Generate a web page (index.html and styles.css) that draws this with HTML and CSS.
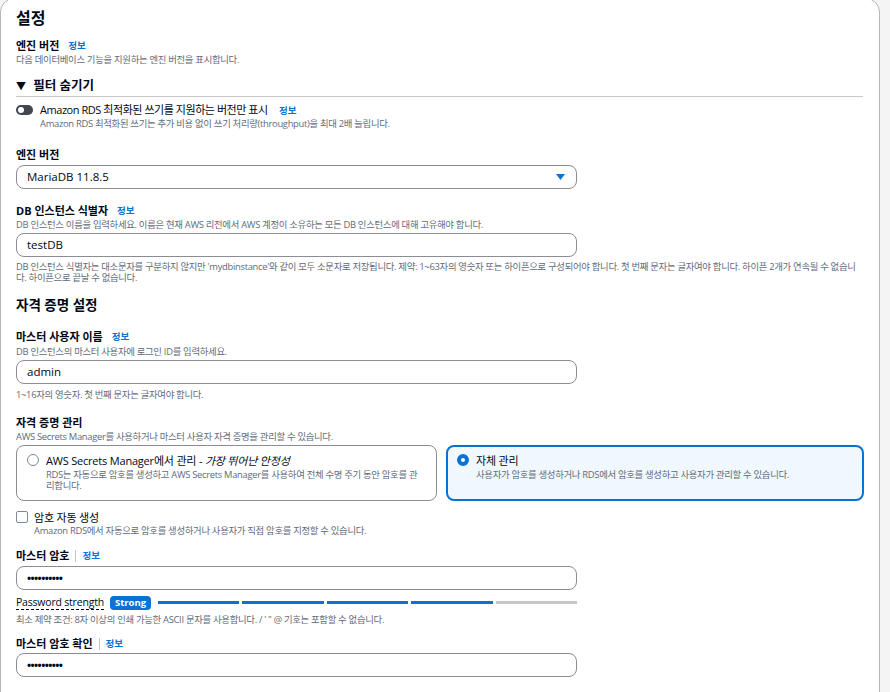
FILE: index.html
```html
<!DOCTYPE html>
<html lang="ko">
<head>
<meta charset="utf-8">
<title>설정</title>
<link rel="stylesheet" href="styles.css">
</head>
<body>
<div class="page">
  <section class="card">
    <h2 class="h-main">설정</h2>

    <div class="field f-first">
      <div class="label">엔진 버전 <a class="info">정보</a></div>
      <div class="desc">다음 데이터베이스 기능을 지원하는 엔진 버전을 표시합니다.</div>
    </div>

    <div class="expander">
      <span class="caret">▼</span> 필터 숨기기
    </div>

    <div class="toggle-row">
      <span class="toggle"><span class="knob"></span></span>
      <div class="toggle-text">
        <div class="toggle-label">Amazon RDS 최적화된 쓰기를 지원하는 버전만 표시 <a class="info">정보</a></div>
        <div class="desc">Amazon RDS 최적화된 쓰기는 추가 비용 없이 쓰기 처리량(throughput)을 최대 2배 늘립니다.</div>
      </div>
    </div>

    <div class="field f-engine">
      <div class="label">엔진 버전</div>
      <div class="select">
        <span>MariaDB 11.8.5</span>
        <svg class="arrow" width="9" height="6" viewBox="0 0 9 6"><path d="M0 0H9L4.5 6Z" fill="#0972d3"/></svg>
      </div>
    </div>

    <div class="field f-db">
      <div class="label">DB 인스턴스 식별자 <a class="info">정보</a></div>
      <div class="desc">DB 인스턴스 이름을 입력하세요. 이름은 현재 AWS 리전에서 AWS 계정이 소유하는 모든 DB 인스턴스에 대해 고유해야 합니다.</div>
      <div class="input">testDB</div>
      <div class="desc constraint">DB 인스턴스 식별자는 대소문자를 구분하지 않지만 'mydbinstance'와 같이 모두 소문자로 저장됩니다. 제약: 1~63자의 영숫자 또는 하이픈으로 구성되어야 합니다. 첫 번째 문자는 글자여야 합니다. 하이픈 2개가 연속될 수 없습니다. 하이픈으로 끝날 수 없습니다.</div>
    </div>

    <h3 class="h-sub">자격 증명 설정</h3>

    <div class="field f-user">
      <div class="label">마스터 사용자 이름 <a class="info">정보</a></div>
      <div class="desc">DB 인스턴스의 마스터 사용자에 로그인 ID를 입력하세요.</div>
      <div class="input">admin</div>
      <div class="desc constraint">1~16자의 영숫자. 첫 번째 문자는 글자여야 합니다.</div>
    </div>

    <div class="field">
      <div class="label">자격 증명 관리</div>
      <div class="desc">AWS Secrets Manager를 사용하거나 마스터 사용자 자격 증명을 관리할 수 있습니다.</div>
      <div class="tiles">
        <div class="tile">
          <span class="radio"></span>
          <div>
            <div class="tile-title">AWS Secrets Manager에서 관리 - <em>가장 뛰어난 안정성</em></div>
            <div class="desc">RDS는 자동으로 암호를 생성하고 AWS Secrets Manager를 사용하여 전체 수명 주기 동안 암호를 관리합니다.</div>
          </div>
        </div>
        <div class="tile selected">
          <span class="radio on"></span>
          <div>
            <div class="tile-title">자체 관리</div>
            <div class="desc">사용자가 암호를 생성하거나 RDS에서 암호를 생성하고 사용자가 관리할 수 있습니다.</div>
          </div>
        </div>
      </div>
    </div>

    <div class="check-row">
      <span class="checkbox"></span>
      <div>
        <div class="check-label">암호 자동 생성</div>
        <div class="desc">Amazon RDS에서 자동으로 암호를 생성하거나 사용자가 직접 암호를 지정할 수 있습니다.</div>
      </div>
    </div>

    <div class="field f-pw">
      <div class="label">마스터 암호<span class="divider"></span><a class="info">정보</a></div>
      <div class="input pw">••••••••••</div>
      <div class="strength">
        <span class="strength-label">Password strength</span>
        <span class="badge">Strong</span>
        <div class="bars">
          <span class="bar on"></span><span class="bar on"></span><span class="bar on"></span><span class="bar on"></span><span class="bar"></span>
        </div>
      </div>
      <div class="desc constraint">최소 제약 조건: 8자 이상의 인쇄 가능한 ASCII 문자를 사용합니다. / ' " @ 기호는 포함할 수 없습니다.</div>
    </div>

    <div class="field f-pw2">
      <div class="label">마스터 암호 확인<span class="divider"></span><a class="info">정보</a></div>
      <div class="input pw">••••••••••</div>
    </div>
  </section>
</div>
</body>
</html>
```

FILE: styles.css
```css
* { box-sizing: border-box; }
html, body { margin: 0; padding: 0; }
body {
  background: #f4f4f5;
  font-family: "Open Sans", "Noto Sans CJK KR", sans-serif;
  color: #000716;
  height: 692px;
  overflow: hidden;
}
.page { width: 880px; }
.card {
  background: #fff;
  border: 1px solid #b6b6bd;
  border-radius: 14px;
  margin-top: -2px;
  padding: 8px 16px 20px 15px;
  min-height: 720px;
}
.h-main {
  margin: 0;
  font-size: 16px;
  line-height: 22px;
  font-weight: 700;
}
.h-sub {
  margin: 12px 0 0;
  font-size: 13.5px;
  line-height: 20px;
  font-weight: 700;
}
.field { margin-top: 16px; }
.f-first { margin-top: 10px; }
.f-engine { margin-top: 19px; }
.f-db { margin-top: 15px; }
.f-user { margin-top: 15px; }
.label {
  font-size: 11px;
  line-height: 14px;
  font-weight: 700;
  display: flex;
  align-items: center;
}
.info {
  color: #0972d3;
  font-size: 9.5px;
  font-weight: 700;
  margin-left: 9px;
  text-decoration: none;
  letter-spacing: 0;
}
.divider {
  display: inline-block;
  width: 1px;
  height: 12px;
  background: #c6c6cd;
  margin-left: 6px;
}
.divider + .info { margin-left: 6px; }
.desc {
  font-size: 9.4px;
  line-height: 11px;
  color: #5f6b7a;
  letter-spacing: -0.3px;
}
.label + .desc { margin-top: 1.5px; }
.f-first .label + .desc { margin-top: 0.5px; }
.expander {
  margin-top: 12px;
  font-size: 12.5px;
  line-height: 18px;
  font-weight: 700;
  padding-bottom: 1px;
  border-bottom: 1px solid #c6c6cd;
}
.caret { font-size: 10px; margin-right: 4px; }
.toggle-row {
  margin-top: 6px;
  display: flex;
  gap: 7px;
}
.toggle {
  flex: none;
  width: 17px;
  height: 10px;
  border-radius: 5px;
  background: #424650;
  margin-top: 2px;
  position: relative;
}
.knob {
  position: absolute;
  left: 2px;
  top: 2px;
  width: 6px;
  height: 6px;
  border-radius: 50%;
  background: #fff;
}
.toggle-label { font-size: 11px; line-height: 14px; letter-spacing: -0.45px; }
.toggle-label .info { margin-left: 9px; }
.toggle-text .desc { margin-top: 0; }
.select, .input {
  width: 561px;
  height: 24px;
  border: 1px solid #8c8c94;
  border-radius: 8px;
  padding: 0 10px;
  font-size: 11.5px;
  line-height: 22px;
  display: flex;
  align-items: center;
}
.select { justify-content: space-between; margin-top: 3px; padding-right: 11px; }
.desc + .input { margin-top: 2.5px; }
.input + .desc { margin-top: 5.5px; }
.f-db .input + .desc { margin-top: 4.5px; }
.constraint { width: 848px; }
.f-user .desc + .input { margin-top: 3px; }
.f-user .input + .desc { margin-top: 5px; }
.tiles {
  margin-top: 2.5px;
  display: flex;
  gap: 9px;
  width: 848px;
}
.tile {
  width: 421px;
  height: 56px;
  border: 1px solid #8c8c94;
  border-radius: 8px;
  padding: 8px 14px 0 10px;
  display: flex;
  gap: 7px;
}
.tile.selected {
  width: 418px;
  border: 2px solid #0972d3;
  background: #f0f8fe;
  padding: 7px 9px 0;
}
.tile-title { font-size: 11px; line-height: 14px; letter-spacing: -0.2px; }
.tile-title em { font-style: italic; }
.tile .desc { margin-top: 1px; }
.radio {
  flex: none;
  width: 12px;
  height: 12px;
  border: 1px solid #7d8998;
  border-radius: 50%;
  margin-top: 0;
  background: #fff;
}
.radio.on { border: 4px solid #0972d3; }
.check-row {
  margin-top: 10px;
  display: flex;
  gap: 6px;
}
.checkbox {
  flex: none;
  width: 12px;
  height: 12px;
  border: 1px solid #7d8998;
  border-radius: 2px;
  margin-top: 0;
}
.check-label { font-size: 11px; line-height: 14px; letter-spacing: -0.2px; }
.check-row .desc { margin-top: 0; }
.f-pw { margin-top: 13px; }
.label + .input { margin-top: 3px; }
.pw { font-size: 11px; letter-spacing: -0.6px; font-weight: 700; }
.strength {
  margin-top: 6px;
  display: flex;
  align-items: center;
  height: 14px;
  width: 561px;
}
.strength-label {
  font-size: 10.5px;
  line-height: 14px;
  border-bottom: 1px dashed #000716;
  letter-spacing: -0.2px;
}
.badge {
  margin-left: 6px;
  background: #0972d3;
  color: #fff;
  font-size: 9.5px;
  font-weight: 700;
  line-height: 14px;
  padding: 0 5px;
  border-radius: 4px;
}
.bars {
  margin-left: 7px;
  flex: 1;
  display: flex;
  gap: 3px;
}
.bar {
  flex: 1;
  height: 3px;
  background: #c6c6cd;
}
.bar.on { background: #0972d3; }
.strength + .desc { margin-top: 4px; }
.f-pw2 { margin-top: 12px; }
.f-pw2 .label + .input { margin-top: 2px; }
```
